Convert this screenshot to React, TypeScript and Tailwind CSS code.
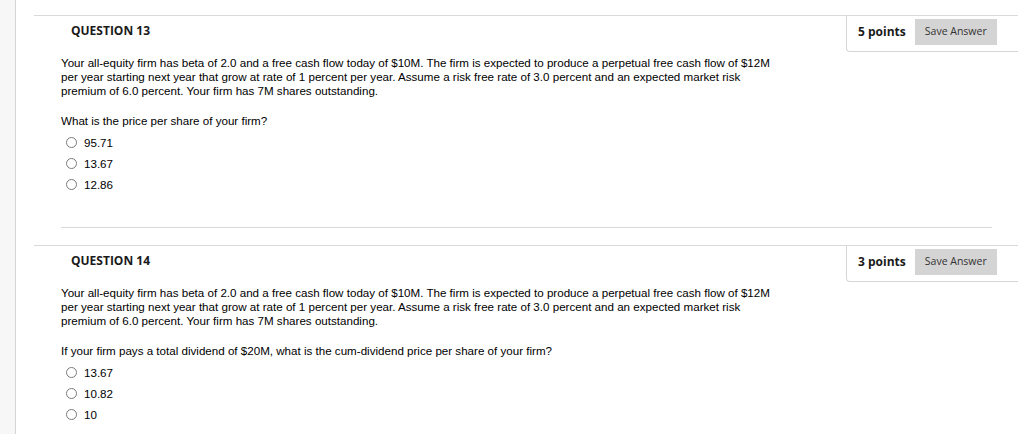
const questions = [
  {
    num: 13,
    points: 5,
    prompt: 'What is the price per share of your firm?',
    options: ['95.71', '13.67', '12.86'],
  },
  {
    num: 14,
    points: 3,
    prompt: 'If your firm pays a total dividend of $20M, what is the cum-dividend price per share of your firm?',
    options: ['13.67', '10.82', '10'],
  },
];

const bodyLines = [
  'Your all-equity firm has beta of 2.0 and a free cash flow today of $10M. The firm is expected to produce a perpetual free cash flow of $12M',
  'per year starting next year that grow at rate of 1 percent per year. Assume a risk free rate of 3.0 percent and an expected market risk',
  'premium of 6.0 percent. Your firm has 7M shares outstanding.',
];

function Question({ q, last }: { q: (typeof questions)[number]; last: boolean }) {
  return (
    <div className="border-t border-[#d9d9d9]">
      {/* header row */}
      <div className="flex justify-between items-start">
        <div className="pl-[37px] pt-[6px] text-[12px] font-bold text-[#1a1a1a] font-['Open_Sans',sans-serif]">
          QUESTION {q.num}
        </div>
        <div className="w-[172px] h-[36px] flex items-start pt-[3px] border-l border-b border-[#d6d6d6] rounded-bl-[4px] pl-[11px] gap-[9px] font-['Open_Sans',sans-serif]">
          <span className="text-[12px] leading-[26px] font-bold text-[#1a1a1a]">{q.points} points</span>
          <button className="w-[82px] h-[26px] bg-[#d4d4d4] text-[10.5px] text-[#333]">Save Answer</button>
        </div>
      </div>

      {/* body */}
      <div className="pl-[27px] mt-[4px] font-['Liberation_Sans',Arial,sans-serif] text-[11.6px] leading-[14px] text-[#000]">
        <p className="whitespace-nowrap">
          {bodyLines.map((l, i) => (
            <span key={i} className="block">{l}</span>
          ))}
        </p>
        <p className="mt-[16px]">{q.prompt}</p>
        <div className="flex flex-col mt-[4px]">
          {q.options.map((o) => (
            <label key={o} className="flex items-center h-[21px] gap-[7px] pl-[5px]">
              <span className="w-[11px] h-[11px] rounded-full border border-[#7a7a7a] bg-white" />
              <span>{o}</span>
            </label>
          ))}
        </div>
      </div>

      {!last && <div className="ml-[27px] mr-[26px] mt-[32px] mb-[17px] border-t border-[#d9d9d9]" />}
    </div>
  );
}

export default function App() {
  return (
    <div className="flex h-[434px] w-[1024px] bg-white overflow-hidden">
      <div className="w-[16px] bg-[#f7f7f7] border-r border-[#d4d4d4]" />
      <div className="flex-1 pl-[18px] pr-[6px] pt-[15px]">
        {questions.map((q, i) => (
          <Question key={q.num} q={q} last={i === questions.length - 1} />
        ))}
      </div>
    </div>
  );
}
